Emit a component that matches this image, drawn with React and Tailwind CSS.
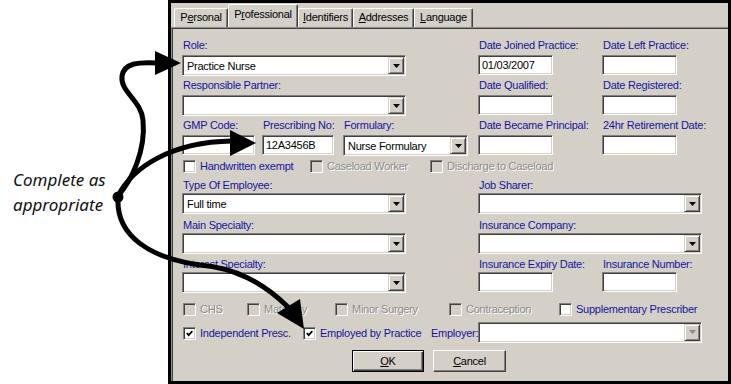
import React from 'react';

const LABEL = 'text-[#14149c]';
const DIS = 'text-[#8a8a8a] [text-shadow:1px_1px_0_#ffffff]';
const SUNKEN =
  'border border-t-[#808080] border-l-[#808080] border-b-white border-r-white shadow-[inset_1px_1px_0_#404040,inset_-1px_-1px_0_#d4d0c8]';

function DropArrow() {
  return (
    <svg width="7" height="4" viewBox="0 0 7 4">
      <path d="M0 0h7L3.5 4z" fill="currentColor" />
    </svg>
  );
}

function Label({ children, className = '' }) {
  return (
    <div className={`h-[14px] pl-[1px] leading-[14px] whitespace-nowrap ${LABEL} ${className}`}>{children}</div>
  );
}

function Edit({ value = '', w = 'w-[75px]' }) {
  return (
    <div className={`${w} h-[20px] bg-white ${SUNKEN} pl-[3px] leading-[18px] text-black whitespace-nowrap`}>
      {value}
    </div>
  );
}

function Combo({ value = '', w = 'w-[224px]', disabled = false }) {
  return (
    <div className={`${w} h-[21px] flex bg-white ${SUNKEN} p-[1px]`}>
      <div className="flex-1 pl-[3px] flex items-center leading-[14px] text-black whitespace-nowrap overflow-hidden">
        {value}
      </div>
      <div
        className={`w-[16px] h-full flex items-center justify-center bg-[#d4d0c8] border border-t-[#d4d0c8] border-l-[#d4d0c8] border-b-[#404040] border-r-[#404040] shadow-[inset_1px_1px_0_#ffffff,inset_-1px_-1px_0_#808080] ${
          disabled ? 'text-[#8a8a8a]' : 'text-black'
        }`}
      >
        <DropArrow />
      </div>
    </div>
  );
}

function Check({ checked = false, disabled = false }) {
  return (
    <div
      className={`w-[13px] h-[13px] shrink-0 flex items-center justify-center ${SUNKEN} ${
        disabled ? 'bg-[#d4d0c8]' : 'bg-white'
      }`}
    >
      {checked && (
        <svg width="7" height="7" viewBox="0 0 7 7">
          <path d="M0.8 3.2 L2.7 5.2 L6.3 1.2" fill="none" stroke="#000" strokeWidth="1.8" />
        </svg>
      )}
    </div>
  );
}

function ChkItem({ label, checked, disabled, className = '' }) {
  return (
    <div className={`flex items-center gap-[4px] h-[13px] ${className}`}>
      <Check checked={checked} disabled={disabled} />
      <span className={`leading-[13px] whitespace-nowrap ${disabled ? DIS : LABEL}`}>{label}</span>
    </div>
  );
}

function Tab({ children, w, active }) {
  return (
    <div
      className={`${w} ${
        active ? 'h-[23px] pt-[2px]' : 'h-[19px] pt-[1px]'
      } flex justify-center border-t border-l border-r border-t-white border-l-white border-r-[#404040] shadow-[inset_-1px_0_0_#808080] rounded-t-[2px] leading-[14px] whitespace-nowrap`}
    >
      {children}
    </div>
  );
}

function Btn({ children, w, primary }) {
  return (
    <div
      className={`${w} h-[22px] flex items-center justify-center leading-[14px] bg-[#d4d0c8] ${
        primary
          ? 'border border-black shadow-[inset_1px_1px_0_#ffffff,inset_-1px_-1px_0_#404040,inset_-2px_-2px_0_#808080]'
          : 'border border-t-white border-l-white border-b-[#404040] border-r-[#404040] shadow-[inset_-1px_-1px_0_#808080]'
      }`}
    >
      {children}
    </div>
  );
}

function Dialog() {
  return (
    <div className="w-[563px] h-[384px] shrink-0 flex flex-col bg-[#d4d0c8] border-[3px] border-black">
      <div className="h-[24px] flex items-end pl-[3px]">
        <Tab w="w-[54px]">
          P<span className="underline">e</span>rsonal
        </Tab>
        <Tab w="w-[70px]" active>
          P<span className="underline">r</span>ofessional
        </Tab>
        <Tab w="w-[55px]">
          <span className="underline">I</span>dentifiers
        </Tab>
        <Tab w="w-[61px]">
          <span className="underline">A</span>ddresses
        </Tab>
        <Tab w="w-[59px]">
          <span className="underline">L</span>anguage
        </Tab>
      </div>

      <div className="flex-1 flex flex-col border-t border-l border-t-[#8c8c8c] border-l-[#8c8c8c] shadow-[inset_1px_1px_0_#404040] pl-[10px] pt-[10px]">
        {/* row 1 */}
        <div className="flex">
          <div className="w-[296px] shrink-0">
            <Label className="mb-[3px]">Role:</Label>
            <Combo value="Practice Nurse" />
          </div>
          <div className="flex gap-[49px]">
            <div className="w-[75px]">
              <Label className="mb-[3px]">Date Joined Practice:</Label>
              <Edit value="01/03/2007" />
            </div>
            <div className="w-[75px]">
              <Label className="mb-[3px]">Date Left Practice:</Label>
              <Edit />
            </div>
          </div>
        </div>

        {/* row 2 */}
        <div className="flex mt-[2px]">
          <div className="w-[296px] shrink-0">
            <Label className="mb-[3px]">Responsible Partner:</Label>
            <Combo />
          </div>
          <div className="flex gap-[49px]">
            <div className="w-[75px]">
              <Label className="mb-[3px]">Date Qualified:</Label>
              <Edit />
            </div>
            <div className="w-[75px]">
              <Label className="mb-[3px]">Date Registered:</Label>
              <Edit />
            </div>
          </div>
        </div>

        {/* row 3 */}
        <div className="flex mt-[2px]">
          <div className="w-[296px] shrink-0 flex">
            <div className="w-[73px]">
              <Label className="mb-[3px]">GMP Code:</Label>
              <Edit w="w-[73px]" />
            </div>
            <div className="w-[72px] ml-[7px]">
              <Label className="mb-[3px]">Prescribing No:</Label>
              <Edit w="w-[72px]" value="12A3456B" />
            </div>
            <div className="w-[125px] ml-[9px]">
              <Label className="mb-[3px]">Formulary:</Label>
              <Combo w="w-[125px]" value="Nurse Formulary" />
            </div>
          </div>
          <div className="flex gap-[49px]">
            <div className="w-[75px]">
              <Label className="mb-[3px]">Date Became Principal:</Label>
              <Edit />
            </div>
            <div className="w-[75px]">
              <Label className="mb-[3px]">24hr Retirement Date:</Label>
              <Edit />
            </div>
          </div>
        </div>

        {/* checkbox row */}
        <div className="flex mt-[4px] pl-[1px]">
          <ChkItem className="w-[127px]" label="Handwritten exempt" />
          <ChkItem className="w-[120px]" label="Caseload Worker" disabled />
          <ChkItem label="Discharge to Caseload" disabled />
        </div>

        {/* row 4 */}
        <div className="flex mt-[5px]">
          <div className="w-[296px] shrink-0">
            <Label className="mb-[1px]">Type Of Employee:</Label>
            <Combo value="Full time" />
          </div>
          <div>
            <Label className="mb-[1px]">Job Sharer:</Label>
            <Combo />
          </div>
        </div>

        {/* row 5 */}
        <div className="flex mt-[4px]">
          <div className="w-[296px] shrink-0">
            <Label className="mb-[1px]">Main Specialty:</Label>
            <Combo />
          </div>
          <div>
            <Label className="mb-[1px]">Insurance Company:</Label>
            <Combo />
          </div>
        </div>

        {/* row 6 */}
        <div className="flex mt-[3px]">
          <div className="w-[296px] shrink-0">
            <Label className="mb-[1px]">Interest Specialty:</Label>
            <Combo />
          </div>
          <div className="flex gap-[49px]">
            <div className="w-[75px]">
              <Label className="mb-[1px]">Insurance Expiry Date:</Label>
              <Edit />
            </div>
            <div className="w-[75px]">
              <Label className="mb-[1px]">Insurance Number:</Label>
              <Edit />
            </div>
          </div>
        </div>

        {/* CHS row */}
        <div className="flex mt-[10px] pl-[1px]">
          <ChkItem className="w-[64px]" label="CHS" disabled />
          <ChkItem className="w-[88px]" label="Maternity" disabled />
          <ChkItem className="w-[114px]" label="Minor Surgery" disabled />
          <ChkItem className="w-[110px]" label="Contraception" disabled />
          <ChkItem label="Supplementary Prescriber" />
        </div>

        {/* independent row */}
        <div className="flex items-center h-[20px] mt-[6px] pl-[1px]">
          <ChkItem className="w-[120px] mt-[3px]" label="Independent Presc." checked />
          <ChkItem className="w-[128px] mt-[3px]" label="Employed by Practice" checked />
          <span className={`w-[47px] mt-[3px] leading-[13px] whitespace-nowrap ${LABEL}`}>Employer:</span>
          <Combo disabled />
        </div>

        {/* buttons */}
        <div className="flex mt-[8px] pl-[170px] gap-[9px]">
          <Btn w="w-[72px]" primary>
            <span className="underline">O</span>K
          </Btn>
          <Btn w="w-[73px]">
            <span className="underline">C</span>ancel
          </Btn>
        </div>
      </div>
    </div>
  );
}

function Arrows() {
  return (
    <svg className="absolute left-0 top-0 pointer-events-none" width="731" height="384" viewBox="0 0 731 384">
      <g fill="none" stroke="#000" strokeWidth="5" strokeLinecap="round">
        <path d="M118 196 C132 180 146 150 143 120 C141 100 120 92 122 76 C124 63 138 62 158 63" />
        <path d="M118 196 C132 168 170 142 232 141" />
        <path d="M118 198 C116 236 150 258 200 265 C235 268 262 282 288 307" />
      </g>
      <circle cx="118" cy="197" r="5.5" fill="#000" />
      <path d="M155 51 L181 63 L155 75 Z" fill="#000" />
      <path d="M230 130 L256 143 L230 156 Z" fill="#000" />
      <path d="M277 313 L300 299 L304 329 Z" fill="#000" />
    </svg>
  );
}

export default function App() {
  return (
    <div className="relative w-[731px] h-[384px] bg-white overflow-hidden flex font-['Liberation_Sans',Arial,sans-serif] text-[11px] tracking-[-0.25px] text-black">
      <div className="w-[168px] shrink-0 pl-[13px] pt-[167px]">
        <p className="font-['Noto_Sans',sans-serif] italic text-[17px] leading-[25px] tracking-normal text-[#111111]">
          Complete as
          <br />
          appropriate
        </p>
      </div>
      <Dialog />
      <Arrows />
    </div>
  );
}
